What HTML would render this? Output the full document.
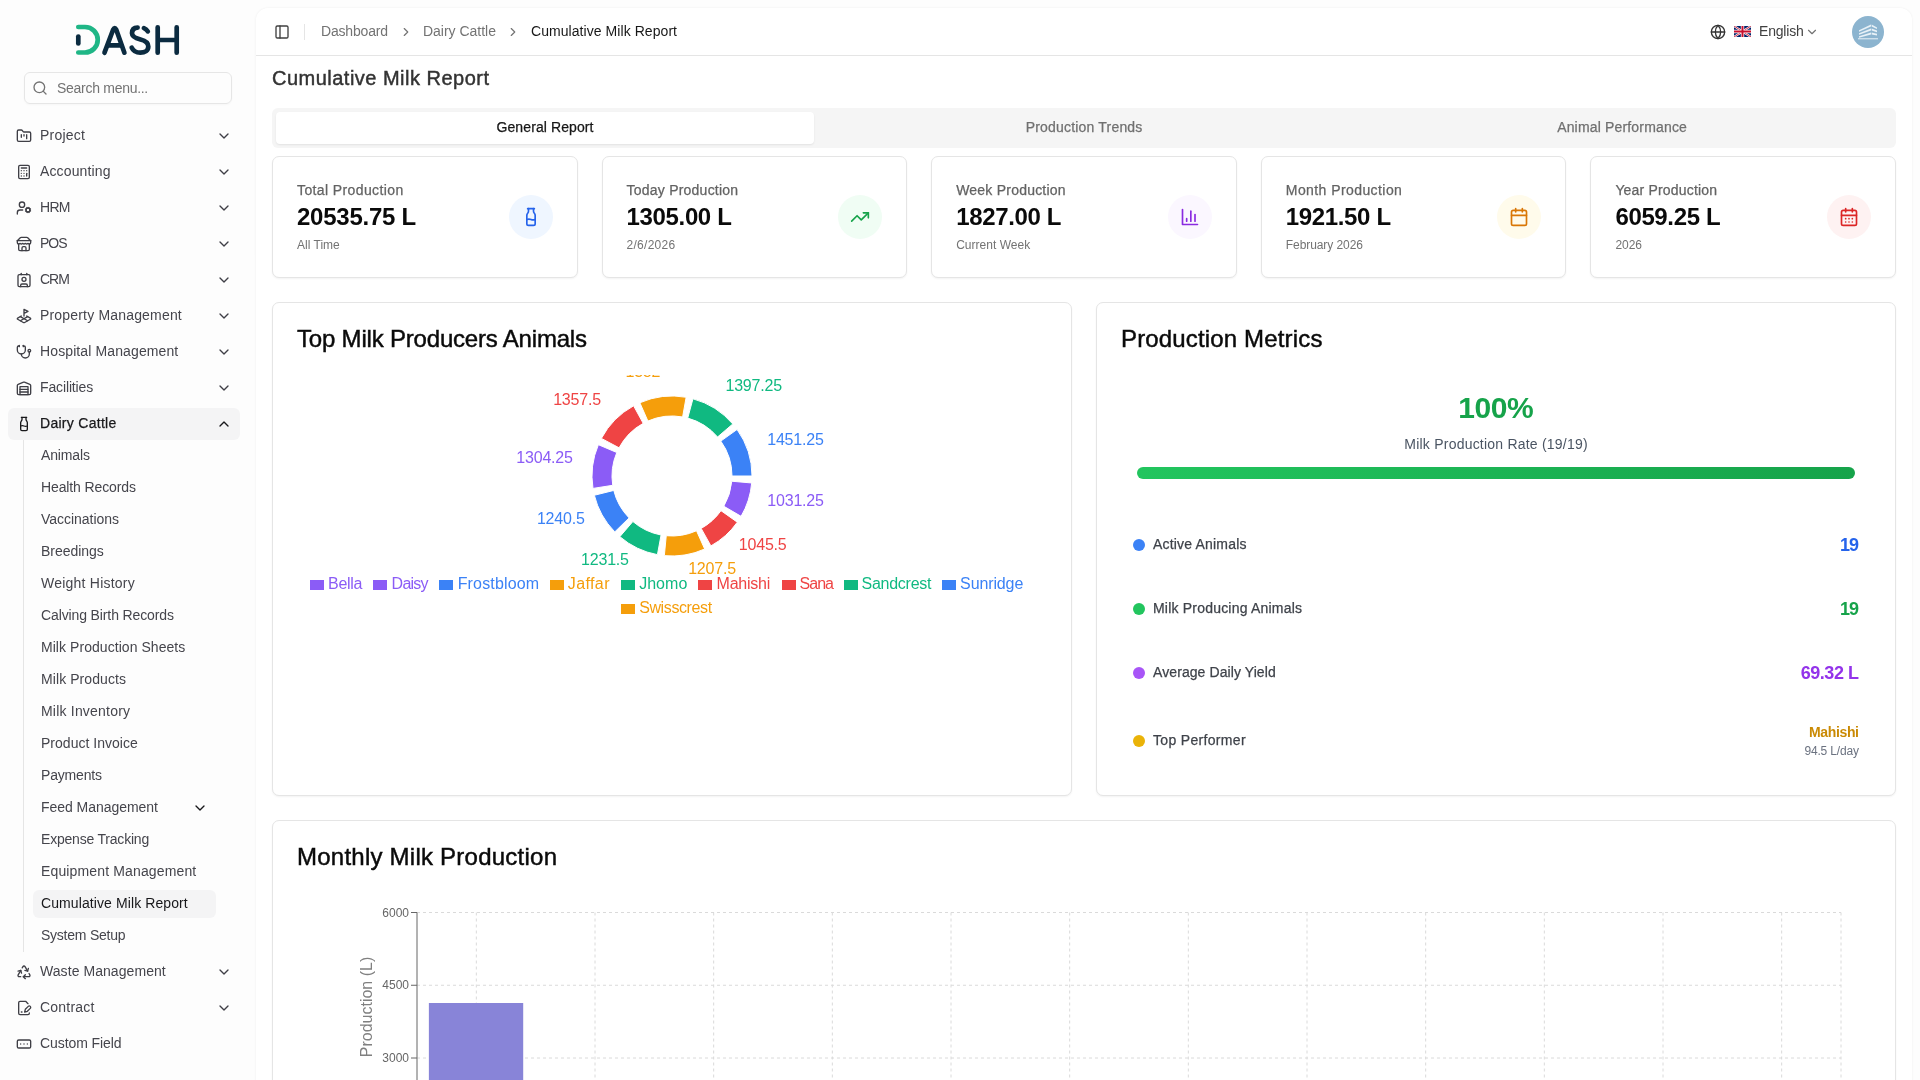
<!DOCTYPE html>
<html lang="en"><head><meta charset="utf-8"><title>Cumulative Milk Report</title>
<style>
*{box-sizing:border-box;margin:0;padding:0}
html,body{width:1920px;height:1080px;overflow:hidden;background:#fdfdfd;font-family:"Liberation Sans",sans-serif;}
#root{position:relative;width:1920px;height:1080px;overflow:hidden;will-change:transform;opacity:.999}
.t{position:absolute;white-space:nowrap}
.ic{position:absolute;display:block}
.abs{position:absolute}
.card{position:absolute;background:#fff;border:1px solid #e5e5e5;border-radius:7px;box-shadow:0 1px 2px rgba(0,0,0,.05)}
</style></head><body><div id="root">

<div class="abs" style="left:256px;top:8px;width:1656px;height:1100px;background:#fff;border-radius:12px 12px 0 0;box-shadow:0 0 3px rgba(0,0,0,.07)"></div>
<div class="abs" style="left:256px;top:55px;width:1656px;height:1px;background:#e5e5e5"></div>
<svg class="abs" style="left:70px;top:20px" width="120" height="40" viewBox="70 20 120 40" fill="none" stroke-linecap="round" stroke-linejoin="round" stroke-width="4.7">
<path d="M78.3 27H85A12.75 12.75 0 0 1 85 52.5H78.3" stroke="#1fb686"/>
<path d="M78.3 36.6V43.4" stroke="#0b2b40"/>
<g stroke="#0b2b40">
<path d="M104.5 52.7L113.2 29.5Q114.7 26.6 116.2 29.5L124.4 52.7"/><path d="M108 45.3H121"/>
<path d="M137.6 27.6C133.6 27.7 132 30 132 33.3C132 37 135.5 38.3 140.5 39.5C145.5 40.7 148.3 42.5 148.3 46.5C148.3 50.5 145 52.7 140.3 52.7C136 52.7 133 50.5 131.7 47.6"/>
<path d="M143.9 28.1C145.4 28.7 146.9 29.9 147.8 31.4"/>
<path d="M157.7 27.3V52.7M176.7 27.3V52.7M157.7 40H176.7"/>
</g></svg>
<div class="abs" style="left:24px;top:72px;width:208px;height:32px;border:1px solid #e6e6e6;border-radius:6px;box-shadow:0 1px 2px rgba(0,0,0,.03)"></div>
<svg class="ic" style="left:32px;top:80px" width="16" height="16" viewBox="0 0 24 24" fill="none" stroke="#737373" stroke-width="2" stroke-linecap="round" stroke-linejoin="round"><circle cx="11" cy="11" r="8"/><path d="m21 21-4.3-4.3"/></svg>
<div class="t" style="top:77.5px;font-size:14px;line-height:21px;color:#737373;font-weight:400;letter-spacing:-0.284px;left:57px;">Search menu...</div>
<svg class="ic" style="left:16px;top:128px" width="16" height="16" viewBox="0 0 24 24" fill="none" stroke="#3f3f46" stroke-width="2" stroke-linecap="round" stroke-linejoin="round"><path d="M4 20h16a2 2 0 0 0 2-2V8a2 2 0 0 0-2-2h-7.93a2 2 0 0 1-1.66-.9l-.82-1.2A2 2 0 0 0 7.93 3H4a2 2 0 0 0-2 2v13c0 1.1.9 2 2 2Z"/><path d="M8 10v4"/><path d="M12 10v2"/><path d="M16 10v6"/></svg>
<div class="t" style="top:124.5px;font-size:14px;line-height:21px;color:#45454c;font-weight:400;letter-spacing:0.237px;left:40px;">Project</div>
<svg class="ic" style="left:216px;top:128px" width="16" height="16" viewBox="0 0 24 24" fill="none" stroke="#3f3f46" stroke-width="2" stroke-linecap="round" stroke-linejoin="round"><path d="m6 9 6 6 6-6"/></svg>
<svg class="ic" style="left:16px;top:164px" width="16" height="16" viewBox="0 0 24 24" fill="none" stroke="#3f3f46" stroke-width="2" stroke-linecap="round" stroke-linejoin="round"><rect width="16" height="20" x="4" y="2" rx="2"/><line x1="8" x2="16" y1="6" y2="6"/><line x1="16" x2="16" y1="14" y2="18"/><path d="M16 10h.01"/><path d="M12 10h.01"/><path d="M8 10h.01"/><path d="M12 14h.01"/><path d="M8 14h.01"/><path d="M12 18h.01"/><path d="M8 18h.01"/></svg>
<div class="t" style="top:160.5px;font-size:14px;line-height:21px;color:#45454c;font-weight:400;letter-spacing:0.135px;left:40px;">Accounting</div>
<svg class="ic" style="left:216px;top:164px" width="16" height="16" viewBox="0 0 24 24" fill="none" stroke="#3f3f46" stroke-width="2" stroke-linecap="round" stroke-linejoin="round"><path d="m6 9 6 6 6-6"/></svg>
<svg class="ic" style="left:16px;top:200px" width="16" height="16" viewBox="0 0 24 24" fill="none" stroke="#3f3f46" stroke-width="2" stroke-linecap="round" stroke-linejoin="round"><circle cx="18" cy="15" r="3"/><circle cx="9" cy="7" r="4"/><path d="M10 15H6a4 4 0 0 0-4 4v2"/><path d="m21.7 16.4-.9-.3"/><path d="m15.2 13.9-.9-.3"/><path d="m16.6 18.7.3-.9"/><path d="m19.1 12.2.3-.9"/><path d="m19.6 18.7-.4-1"/><path d="m16.8 12.3-.4-1"/><path d="m14.3 16.6 1-.4"/><path d="m20.7 13.8 1-.4"/></svg>
<div class="t" style="top:196.5px;font-size:14px;line-height:21px;color:#45454c;font-weight:400;letter-spacing:-0.695px;left:40px;">HRM</div>
<svg class="ic" style="left:216px;top:200px" width="16" height="16" viewBox="0 0 24 24" fill="none" stroke="#3f3f46" stroke-width="2" stroke-linecap="round" stroke-linejoin="round"><path d="m6 9 6 6 6-6"/></svg>
<svg class="ic" style="left:16px;top:236px" width="16" height="16" viewBox="0 0 24 24" fill="none" stroke="#3f3f46" stroke-width="2" stroke-linecap="round" stroke-linejoin="round"><path d="m2 7 4.41-4.41A2 2 0 0 1 7.83 2h8.34a2 2 0 0 1 1.42.59L22 7"/><path d="M4 12v8a2 2 0 0 0 2 2h12a2 2 0 0 0 2-2v-8"/><path d="M15 22v-4a2 2 0 0 0-2-2h-2a2 2 0 0 0-2 2v4"/><path d="M2 7h20"/><path d="M22 7v3a2 2 0 0 1-2 2a2.7 2.7 0 0 1-1.59-.63.7.7 0 0 0-.82 0A2.7 2.7 0 0 1 16 12a2.7 2.7 0 0 1-1.59-.63.7.7 0 0 0-.82 0A2.7 2.7 0 0 1 12 12a2.7 2.7 0 0 1-1.59-.63.7.7 0 0 0-.82 0A2.7 2.7 0 0 1 8 12a2.7 2.7 0 0 1-1.59-.63.7.7 0 0 0-.82 0A2.7 2.7 0 0 1 4 12a2 2 0 0 1-2-2V7"/></svg>
<div class="t" style="top:232.5px;font-size:14px;line-height:21px;color:#45454c;font-weight:400;letter-spacing:-1.000px;left:40px;">POS</div>
<svg class="ic" style="left:216px;top:236px" width="16" height="16" viewBox="0 0 24 24" fill="none" stroke="#3f3f46" stroke-width="2" stroke-linecap="round" stroke-linejoin="round"><path d="m6 9 6 6 6-6"/></svg>
<svg class="ic" style="left:16px;top:272px" width="16" height="16" viewBox="0 0 24 24" fill="none" stroke="#3f3f46" stroke-width="2" stroke-linecap="round" stroke-linejoin="round"><path d="M16 2v2"/><path d="M7 22v-2a2 2 0 0 1 2-2h6a2 2 0 0 1 2 2v2"/><path d="M8 2v2"/><circle cx="12" cy="11" r="3"/><rect x="3" y="4" width="18" height="18" rx="2"/></svg>
<div class="t" style="top:268.5px;font-size:14px;line-height:21px;color:#45454c;font-weight:400;letter-spacing:-1.000px;left:40px;">CRM</div>
<svg class="ic" style="left:216px;top:272px" width="16" height="16" viewBox="0 0 24 24" fill="none" stroke="#3f3f46" stroke-width="2" stroke-linecap="round" stroke-linejoin="round"><path d="m6 9 6 6 6-6"/></svg>
<svg class="ic" style="left:16px;top:308px" width="16" height="16" viewBox="0 0 24 24" fill="none" stroke="#3f3f46" stroke-width="2" stroke-linecap="round" stroke-linejoin="round"><path d="m12 8 6-3-6-3v10"/><path d="m8 11.99-5.5 3.14a1 1 0 0 0 0 1.74l8.5 4.86a2 2 0 0 0 2 0l8.5-4.86a1 1 0 0 0 0-1.74L16 12"/><path d="m6.49 12.85 11.02 6.3"/><path d="M17.51 12.85 6.5 19.15"/></svg>
<div class="t" style="top:304.5px;font-size:14px;line-height:21px;color:#45454c;font-weight:400;letter-spacing:0.179px;left:40px;">Property Management</div>
<svg class="ic" style="left:216px;top:308px" width="16" height="16" viewBox="0 0 24 24" fill="none" stroke="#3f3f46" stroke-width="2" stroke-linecap="round" stroke-linejoin="round"><path d="m6 9 6 6 6-6"/></svg>
<svg class="ic" style="left:16px;top:344px" width="16" height="16" viewBox="0 0 24 24" fill="none" stroke="#3f3f46" stroke-width="2" stroke-linecap="round" stroke-linejoin="round"><path d="M11 2v2"/><path d="M5 2v2"/><path d="M5 3H4a2 2 0 0 0-2 2v4a6 6 0 0 0 12 0V5a2 2 0 0 0-2-2h-1"/><path d="M8 15a6 6 0 0 0 12 0v-3"/><circle cx="20" cy="10" r="2"/></svg>
<div class="t" style="top:340.5px;font-size:14px;line-height:21px;color:#45454c;font-weight:400;letter-spacing:0.115px;left:40px;">Hospital Management</div>
<svg class="ic" style="left:216px;top:344px" width="16" height="16" viewBox="0 0 24 24" fill="none" stroke="#3f3f46" stroke-width="2" stroke-linecap="round" stroke-linejoin="round"><path d="m6 9 6 6 6-6"/></svg>
<svg class="ic" style="left:16px;top:380px" width="16" height="16" viewBox="0 0 24 24" fill="none" stroke="#3f3f46" stroke-width="2" stroke-linecap="round" stroke-linejoin="round"><path d="M22 8.35V20a2 2 0 0 1-2 2H4a2 2 0 0 1-2-2V8.35A2 2 0 0 1 3.26 6.5l8-3.2a2 2 0 0 1 1.48 0l8 3.2A2 2 0 0 1 22 8.35Z"/><path d="M6 18h12"/><path d="M6 14h12"/><rect width="12" height="12" x="6" y="10"/></svg>
<div class="t" style="top:376.5px;font-size:14px;line-height:21px;color:#45454c;font-weight:400;letter-spacing:-0.135px;left:40px;">Facilities</div>
<svg class="ic" style="left:216px;top:380px" width="16" height="16" viewBox="0 0 24 24" fill="none" stroke="#3f3f46" stroke-width="2" stroke-linecap="round" stroke-linejoin="round"><path d="m6 9 6 6 6-6"/></svg>
<div class="abs" style="left:8px;top:408px;width:232px;height:32px;background:#f4f4f5;border-radius:6px"></div>
<svg class="ic" style="left:16px;top:416px" width="16" height="16" viewBox="0 0 24 24" fill="none" stroke="#18181b" stroke-width="2" stroke-linecap="round" stroke-linejoin="round"><path d="M8 2h8"/><path d="M9 2v2.789a4 4 0 0 1-.672 2.219l-.656.984A4 4 0 0 0 7 10.212V20a2 2 0 0 0 2 2h6a2 2 0 0 0 2-2v-9.789a4 4 0 0 0-.672-2.219l-.656-.984A4 4 0 0 1 15 4.788V2"/><path d="M7 15a6.472 6.472 0 0 1 5 0 6.47 6.47 0 0 0 5 0"/></svg>
<div class="t" style="top:412.5px;font-size:14px;line-height:21px;color:#18181b;font-weight:400;-webkit-text-stroke:0.25px #18181b;letter-spacing:0.283px;left:40px;">Dairy Cattle</div>
<svg class="ic" style="left:216px;top:416px" width="16" height="16" viewBox="0 0 24 24" fill="none" stroke="#18181b" stroke-width="2" stroke-linecap="round" stroke-linejoin="round"><path d="m18 15-6-6-6 6"/></svg>
<div class="abs" style="left:23px;top:440px;width:1px;height:512px;background:#e5e5e5"></div>
<div class="t" style="top:444.5px;font-size:14px;line-height:21px;color:#45454c;font-weight:400;letter-spacing:-0.133px;left:41px;">Animals</div>
<div class="t" style="top:476.5px;font-size:14px;line-height:21px;color:#45454c;font-weight:400;letter-spacing:-0.115px;left:41px;">Health Records</div>
<div class="t" style="top:508.5px;font-size:14px;line-height:21px;color:#45454c;font-weight:400;letter-spacing:-0.031px;left:41px;">Vaccinations</div>
<div class="t" style="top:540.5px;font-size:14px;line-height:21px;color:#45454c;font-weight:400;letter-spacing:-0.037px;left:41px;">Breedings</div>
<div class="t" style="top:572.5px;font-size:14px;line-height:21px;color:#45454c;font-weight:400;letter-spacing:0.228px;left:41px;">Weight History</div>
<div class="t" style="top:604.5px;font-size:14px;line-height:21px;color:#45454c;font-weight:400;letter-spacing:-0.120px;left:41px;">Calving Birth Records</div>
<div class="t" style="top:636.5px;font-size:14px;line-height:21px;color:#45454c;font-weight:400;letter-spacing:0.051px;left:41px;">Milk Production Sheets</div>
<div class="t" style="top:668.5px;font-size:14px;line-height:21px;color:#45454c;font-weight:400;letter-spacing:0.081px;left:41px;">Milk Products</div>
<div class="t" style="top:700.5px;font-size:14px;line-height:21px;color:#45454c;font-weight:400;letter-spacing:0.203px;left:41px;">Milk Inventory</div>
<div class="t" style="top:732.5px;font-size:14px;line-height:21px;color:#45454c;font-weight:400;letter-spacing:0.018px;left:41px;">Product Invoice</div>
<div class="t" style="top:764.5px;font-size:14px;line-height:21px;color:#45454c;font-weight:400;letter-spacing:-0.179px;left:41px;">Payments</div>
<div class="t" style="top:796.5px;font-size:14px;line-height:21px;color:#45454c;font-weight:400;letter-spacing:-0.038px;left:41px;">Feed Management</div>
<svg class="ic" style="left:192px;top:800px" width="16" height="16" viewBox="0 0 24 24" fill="none" stroke="#18181b" stroke-width="2" stroke-linecap="round" stroke-linejoin="round"><path d="m6 9 6 6 6-6"/></svg>
<div class="t" style="top:828.5px;font-size:14px;line-height:21px;color:#45454c;font-weight:400;letter-spacing:-0.203px;left:41px;">Expense Tracking</div>
<div class="t" style="top:860.5px;font-size:14px;line-height:21px;color:#45454c;font-weight:400;letter-spacing:0.142px;left:41px;">Equipment Management</div>
<div class="abs" style="left:33px;top:890px;width:183px;height:28px;background:#f4f4f5;border-radius:6px"></div>
<div class="t" style="top:892.5px;font-size:14px;line-height:21px;color:#18181b;font-weight:400;letter-spacing:0.097px;left:41px;">Cumulative Milk Report</div>
<div class="t" style="top:924.5px;font-size:14px;line-height:21px;color:#45454c;font-weight:400;letter-spacing:-0.241px;left:41px;">System Setup</div>
<svg class="ic" style="left:16px;top:964px" width="16" height="16" viewBox="0 0 24 24" fill="none" stroke="#3f3f46" stroke-width="2" stroke-linecap="round" stroke-linejoin="round"><path d="M7 19H4.815a1.83 1.83 0 0 1-1.57-.881 1.785 1.785 0 0 1-.004-1.784L7.196 9.5"/><path d="M11 19h8.203a1.83 1.83 0 0 0 1.556-.89 1.784 1.784 0 0 0 0-1.775l-1.226-2.12"/><path d="m14 16-3 3 3 3"/><path d="M8.293 13.596 7.196 9.5 3.1 10.598"/><path d="m9.344 5.811 1.093-1.892A1.83 1.83 0 0 1 11.985 3a1.784 1.784 0 0 1 1.546.888l3.943 6.843"/><path d="m13.378 9.633 4.096 1.098 1.097-4.096"/></svg>
<div class="t" style="top:960.5px;font-size:14px;line-height:21px;color:#45454c;font-weight:400;letter-spacing:0.066px;left:40px;">Waste Management</div>
<svg class="ic" style="left:216px;top:964px" width="16" height="16" viewBox="0 0 24 24" fill="none" stroke="#3f3f46" stroke-width="2" stroke-linecap="round" stroke-linejoin="round"><path d="m6 9 6 6 6-6"/></svg>
<svg class="ic" style="left:16px;top:1000px" width="16" height="16" viewBox="0 0 24 24" fill="none" stroke="#3f3f46" stroke-width="2" stroke-linecap="round" stroke-linejoin="round"><path d="M20 19.5v.5a2 2 0 0 1-2 2H6a2 2 0 0 1-2-2V4a2 2 0 0 1 2-2h8.5L18 5.5"/><path d="M8 18h1"/><path d="M18.4 9.6a2 2 0 1 1 3 3L17 17l-4 1 1-4Z"/></svg>
<div class="t" style="top:996.5px;font-size:14px;line-height:21px;color:#45454c;font-weight:400;letter-spacing:0.225px;left:40px;">Contract</div>
<svg class="ic" style="left:216px;top:1000px" width="16" height="16" viewBox="0 0 24 24" fill="none" stroke="#3f3f46" stroke-width="2" stroke-linecap="round" stroke-linejoin="round"><path d="m6 9 6 6 6-6"/></svg>
<svg class="ic" style="left:16px;top:1036px" width="16" height="16" viewBox="0 0 24 24" fill="none" stroke="#3f3f46" stroke-width="2" stroke-linecap="round" stroke-linejoin="round"><rect width="20" height="12" x="2" y="6" rx="2"/><path d="M12 12h.01"/><path d="M17 12h.01"/><path d="M7 12h.01"/></svg>
<div class="t" style="top:1032.5px;font-size:14px;line-height:21px;color:#45454c;font-weight:400;letter-spacing:-0.088px;left:40px;">Custom Field</div>
<svg class="ic" style="left:274px;top:24px" width="16" height="16" viewBox="0 0 24 24" fill="none" stroke="#404040" stroke-width="2" stroke-linecap="round" stroke-linejoin="round"><rect width="18" height="18" x="3" y="3" rx="2"/><path d="M9 3v18"/></svg>
<div class="abs" style="left:304px;top:24px;width:1px;height:16px;background:#e5e5e5"></div>
<div class="t" style="top:20.5px;font-size:14px;line-height:21px;color:#737373;font-weight:400;letter-spacing:-0.188px;left:321px;">Dashboard</div>
<svg class="ic" style="left:399px;top:24.5px" width="14" height="14" viewBox="0 0 24 24" fill="none" stroke="#737373" stroke-width="2" stroke-linecap="round" stroke-linejoin="round"><path d="m9 18 6-6-6-6"/></svg>
<div class="t" style="top:20.5px;font-size:14px;line-height:21px;color:#737373;font-weight:400;letter-spacing:-0.013px;left:423px;">Dairy Cattle</div>
<svg class="ic" style="left:506px;top:24.5px" width="14" height="14" viewBox="0 0 24 24" fill="none" stroke="#737373" stroke-width="2" stroke-linecap="round" stroke-linejoin="round"><path d="m9 18 6-6-6-6"/></svg>
<div class="t" style="top:20.5px;font-size:14px;line-height:21px;color:#171717;font-weight:400;letter-spacing:0.061px;left:531px;">Cumulative Milk Report</div>
<svg class="ic" style="left:1710px;top:24px" width="16" height="16" viewBox="0 0 24 24" fill="none" stroke="#333" stroke-width="2" stroke-linecap="round" stroke-linejoin="round"><circle cx="12" cy="12" r="10"/><path d="M12 2a14.5 14.5 0 0 0 0 20 14.5 14.5 0 0 0 0-20"/><path d="M2 12h20"/></svg>
<svg class="abs" style="left:1734px;top:25.5px" width="17" height="11" viewBox="0 0 60 36" preserveAspectRatio="none">
<clipPath id="fc"><rect width="60" height="36" rx="2"/></clipPath>
<g clip-path="url(#fc)"><rect width="60" height="36" fill="#012169"/>
<path d="M0,0 60,36M60,0 0,36" stroke="#fff" stroke-width="7"/>
<path d="M0,0 60,36M60,0 0,36" stroke="#C8102E" stroke-width="3"/>
<path d="M30,0V36M0,18H60" stroke="#fff" stroke-width="12"/>
<path d="M30,0V36M0,18H60" stroke="#C8102E" stroke-width="7"/></g></svg>
<div class="t" style="top:20.5px;font-size:14px;line-height:21px;color:#404040;font-weight:400;letter-spacing:-0.187px;left:1759px;">English</div>
<svg class="ic" style="left:1805px;top:25px" width="14" height="14" viewBox="0 0 24 24" fill="none" stroke="#737373" stroke-width="2" stroke-linecap="round" stroke-linejoin="round"><path d="m6 9 6 6 6-6"/></svg>
<svg class="abs" style="left:1852px;top:16px" width="32" height="32" viewBox="0 0 32 32">
<circle cx="16" cy="16" r="16" fill="#8cb4cf"/>
<g fill="#e8f1f7"><path d="M7 14.2L19 8.6V10.4L7 15.8Z"/><path d="M7 17.2L19 12.4V14.4L7 18.8Z"/><path d="M7 20.2L19 16.4V18.4L7 21.8Z"/>
<path d="M19.6 8.6L25 11.4V13L19.6 10.4Z"/><path d="M19.6 12.4L25 14.6V16.2L19.6 14.4Z"/><path d="M19.6 16.4L25 17.8V19.4L19.6 18.4Z"/>
<rect x="6" y="22.3" width="20" height="1"/></g></svg>
<div class="t" style="top:64.0px;font-size:20px;line-height:28px;color:#333;font-weight:400;-webkit-text-stroke:0.45px #333;letter-spacing:0.489px;left:272px;">Cumulative Milk Report</div>
<div class="abs" style="left:272px;top:108px;width:1624px;height:40px;background:#f5f5f5;border-radius:6px"></div>
<div class="abs" style="left:276px;top:112px;width:538px;height:32px;background:#fff;border-radius:4px;box-shadow:0 1px 2px rgba(0,0,0,.08)"></div>
<div class="t" style="top:116.5px;font-size:14px;line-height:21px;color:#171717;font-weight:400;-webkit-text-stroke:0.25px #171717;letter-spacing:0.099px;left:545.049px;transform:translateX(-50%);">General Report</div>
<div class="t" style="top:116.5px;font-size:14px;line-height:21px;color:#707070;font-weight:400;-webkit-text-stroke:0.25px #707070;letter-spacing:0.192px;left:1084.096px;transform:translateX(-50%);">Production Trends</div>
<div class="t" style="top:116.5px;font-size:14px;line-height:21px;color:#707070;font-weight:400;-webkit-text-stroke:0.25px #707070;letter-spacing:0.169px;left:1622.084px;transform:translateX(-50%);">Animal Performance</div>
<div class="card" style="left:272.0px;top:156px;width:305.6px;height:122px"></div>
<div class="t" style="top:180.0px;font-size:14px;line-height:20px;color:#636363;font-weight:400;-webkit-text-stroke:0.25px #636363;letter-spacing:0.390px;left:297.0px;">Total Production</div>
<div class="t" style="top:201.0px;font-size:24px;line-height:32px;color:#0a0a0a;font-weight:700;letter-spacing:-0.243px;left:297.0px;">20535.75 L</div>
<div class="t" style="top:237.0px;font-size:12px;line-height:16px;color:#737373;font-weight:400;letter-spacing:0.009px;left:297.0px;">All Time</div>
<div class="abs" style="left:508.6px;top:195px;width:44px;height:44px;border-radius:50%;background:#eff6ff"></div>
<svg class="ic" style="left:520.6px;top:207px" width="20" height="20" viewBox="0 0 24 24" fill="none" stroke="#2563eb" stroke-width="2" stroke-linecap="round" stroke-linejoin="round"><path d="M8 2h8"/><path d="M9 2v2.789a4 4 0 0 1-.672 2.219l-.656.984A4 4 0 0 0 7 10.212V20a2 2 0 0 0 2 2h6a2 2 0 0 0 2-2v-9.789a4 4 0 0 0-.672-2.219l-.656-.984A4 4 0 0 1 15 4.788V2"/><path d="M7 15a6.472 6.472 0 0 1 5 0 6.47 6.47 0 0 0 5 0"/></svg>
<div class="card" style="left:601.6px;top:156px;width:305.6px;height:122px"></div>
<div class="t" style="top:180.0px;font-size:14px;line-height:20px;color:#636363;font-weight:400;-webkit-text-stroke:0.25px #636363;letter-spacing:0.221px;left:626.6px;">Today Production</div>
<div class="t" style="top:201.0px;font-size:24px;line-height:32px;color:#0a0a0a;font-weight:700;letter-spacing:-0.355px;left:626.6px;">1305.00 L</div>
<div class="t" style="top:237.0px;font-size:12px;line-height:16px;color:#737373;font-weight:400;letter-spacing:0.254px;left:626.6px;">2/6/2026</div>
<div class="abs" style="left:838.2px;top:195px;width:44px;height:44px;border-radius:50%;background:#f0fdf4"></div>
<svg class="ic" style="left:850.2px;top:207px" width="20" height="20" viewBox="0 0 24 24" fill="none" stroke="#16a34a" stroke-width="2" stroke-linecap="round" stroke-linejoin="round"><polyline points="22 7 13.5 15.5 8.5 10.5 2 17"/><polyline points="16 7 22 7 22 13"/></svg>
<div class="card" style="left:931.2px;top:156px;width:305.6px;height:122px"></div>
<div class="t" style="top:180.0px;font-size:14px;line-height:20px;color:#636363;font-weight:400;-webkit-text-stroke:0.25px #636363;letter-spacing:0.217px;left:956.2px;">Week Production</div>
<div class="t" style="top:201.0px;font-size:24px;line-height:32px;color:#0a0a0a;font-weight:700;letter-spacing:-0.355px;left:956.2px;">1827.00 L</div>
<div class="t" style="top:237.0px;font-size:12px;line-height:16px;color:#737373;font-weight:400;letter-spacing:0.017px;left:956.2px;">Current Week</div>
<div class="abs" style="left:1167.8px;top:195px;width:44px;height:44px;border-radius:50%;background:#fbf7ff"></div>
<svg class="ic" style="left:1179.8px;top:207px" width="20" height="20" viewBox="0 0 24 24" fill="none" stroke="#8a2be0" stroke-width="2" stroke-linecap="round" stroke-linejoin="round"><path d="M3 3v18h18"/><path d="M18 17V9"/><path d="M13 17V5"/><path d="M8 17v-3"/></svg>
<div class="card" style="left:1260.8px;top:156px;width:305.6px;height:122px"></div>
<div class="t" style="top:180.0px;font-size:14px;line-height:20px;color:#636363;font-weight:400;-webkit-text-stroke:0.25px #636363;letter-spacing:0.424px;left:1285.8000000000002px;">Month Production</div>
<div class="t" style="top:201.0px;font-size:24px;line-height:32px;color:#0a0a0a;font-weight:700;letter-spacing:-0.355px;left:1285.8000000000002px;">1921.50 L</div>
<div class="t" style="top:237.0px;font-size:12px;line-height:16px;color:#737373;font-weight:400;letter-spacing:-0.079px;left:1285.8000000000002px;">February 2026</div>
<div class="abs" style="left:1497.4px;top:195px;width:44px;height:44px;border-radius:50%;background:#fffbeb"></div>
<svg class="ic" style="left:1509.4px;top:207px" width="20" height="20" viewBox="0 0 24 24" fill="none" stroke="#d97706" stroke-width="2" stroke-linecap="round" stroke-linejoin="round"><path d="M8 2v4"/><path d="M16 2v4"/><rect width="18" height="18" x="3" y="4" rx="2"/><path d="M3 10h18"/></svg>
<div class="card" style="left:1590.4px;top:156px;width:305.6px;height:122px"></div>
<div class="t" style="top:180.0px;font-size:14px;line-height:20px;color:#636363;font-weight:400;-webkit-text-stroke:0.25px #636363;letter-spacing:0.178px;left:1615.4px;">Year Production</div>
<div class="t" style="top:201.0px;font-size:24px;line-height:32px;color:#0a0a0a;font-weight:700;letter-spacing:-0.355px;left:1615.4px;">6059.25 L</div>
<div class="t" style="top:237.0px;font-size:12px;line-height:16px;color:#737373;font-weight:400;letter-spacing:-0.034px;left:1615.4px;">2026</div>
<div class="abs" style="left:1827.0px;top:195px;width:44px;height:44px;border-radius:50%;background:#fef2f2"></div>
<svg class="ic" style="left:1839.0px;top:207px" width="20" height="20" viewBox="0 0 24 24" fill="none" stroke="#dc2626" stroke-width="2" stroke-linecap="round" stroke-linejoin="round"><path d="M8 2v4"/><path d="M16 2v4"/><rect width="18" height="18" x="3" y="4" rx="2"/><path d="M3 10h18"/><path d="M8 14h.01"/><path d="M12 14h.01"/><path d="M16 14h.01"/><path d="M8 18h.01"/><path d="M12 18h.01"/><path d="M16 18h.01"/></svg>
<div class="card" style="left:272px;top:302px;width:800px;height:494px"></div>
<div class="card" style="left:1096px;top:302px;width:800px;height:494px"></div>
<div class="t" style="top:323.0px;font-size:24px;line-height:32px;color:#0a0a0a;font-weight:400;-webkit-text-stroke:0.45px #0a0a0a;letter-spacing:-0.191px;left:297px;">Top Milk Producers Animals</div>
<div class="t" style="top:323.0px;font-size:24px;line-height:32px;color:#0a0a0a;font-weight:400;-webkit-text-stroke:0.45px #0a0a0a;letter-spacing:0.156px;left:1121px;">Production Metrics</div>
<svg class="abs" style="left:0;top:375.0px;overflow:hidden" width="1400" height="201" viewBox="0 0 1400 201" font-family="Liberation Sans, sans-serif" font-size="16"><path d="M752.00,101.00A80.0,80.0,0,0,0,737.07,54.47L720.81,66.10A60.0,60.0,0,0,1,732.00,101.00Z" fill="#3b82f6" stroke="#fff" stroke-width="1"/><path d="M732.77,48.97A80.0,80.0,0,0,0,692.96,23.79L687.72,43.10A60.0,60.0,0,0,1,717.58,61.98Z" fill="#10b981" stroke="#fff" stroke-width="1"/><path d="M686.15,22.26A80.0,80.0,0,0,0,639.86,27.74L647.90,46.05A60.0,60.0,0,0,1,682.61,41.95Z" fill="#f59e0b" stroke="#fff" stroke-width="1"/><path d="M633.60,30.82A80.0,80.0,0,0,0,601.39,63.39L619.05,72.79A60.0,60.0,0,0,1,643.20,48.36Z" fill="#ef4444" stroke="#fff" stroke-width="1"/><path d="M598.38,69.68A80.0,80.0,0,0,0,592.97,113.41L612.73,110.30A60.0,60.0,0,0,1,616.79,77.51Z" fill="#8b5cf6" stroke="#fff" stroke-width="1"/><path d="M594.35,120.25A80.0,80.0,0,0,0,614.77,156.90L629.08,142.92A60.0,60.0,0,0,1,613.76,115.44Z" fill="#3b82f6" stroke="#fff" stroke-width="1"/><path d="M619.86,161.67A80.0,80.0,0,0,0,657.43,179.66L661.07,160.00A60.0,60.0,0,0,1,632.89,146.50Z" fill="#10b981" stroke="#fff" stroke-width="1"/><path d="M664.34,180.63A80.0,80.0,0,0,0,704.67,174.03L696.50,155.77A60.0,60.0,0,0,1,666.26,160.72Z" fill="#f59e0b" stroke="#fff" stroke-width="1"/><path d="M710.91,170.90A80.0,80.0,0,0,0,737.31,147.20L720.98,135.65A60.0,60.0,0,0,1,701.18,153.43Z" fill="#ef4444" stroke="#fff" stroke-width="1"/><path d="M741.09,141.33A80.0,80.0,0,0,0,751.70,107.97L731.77,106.23A60.0,60.0,0,0,1,723.82,131.25Z" fill="#8b5cf6" stroke="#fff" stroke-width="1"/><text x="767.22" y="69.71" fill="#3b82f6" text-anchor="start" letter-spacing="-0.2">1451.25</text><text x="725.45" y="15.73" fill="#10b981" text-anchor="start" letter-spacing="-0.2">1397.25</text><text x="660.25" y="1.99" fill="#f59e0b" text-anchor="end" letter-spacing="-0.2">1382</text><text x="600.90" y="29.94" fill="#ef4444" text-anchor="end" letter-spacing="-0.2">1357.5</text><text x="572.76" y="87.96" fill="#8b5cf6" text-anchor="end" letter-spacing="-0.2">1304.25</text><text x="584.64" y="148.92" fill="#3b82f6" text-anchor="end" letter-spacing="-0.2">1240.5</text><text x="628.82" y="190.44" fill="#10b981" text-anchor="end" letter-spacing="-0.2">1231.5</text><text x="688.17" y="198.93" fill="#f59e0b" text-anchor="start" letter-spacing="-0.2">1207.5</text><text x="738.80" y="174.67" fill="#ef4444" text-anchor="start" letter-spacing="-0.2">1045.5</text><text x="767.30" y="130.55" fill="#8b5cf6" text-anchor="start" letter-spacing="-0.2">1031.25</text></svg>
<div class="abs" style="left:309.9px;top:579.75px;width:14px;height:10px;background:#8b5cf6"></div>
<div class="t" style="top:571.71px;font-size:16px;line-height:24px;color:#8b5cf6;font-weight:400;letter-spacing:-0.345px;left:328.09999999999997px;">Bella</div>
<div class="abs" style="left:373.0px;top:579.75px;width:14px;height:10px;background:#8b5cf6"></div>
<div class="t" style="top:571.71px;font-size:16px;line-height:24px;color:#8b5cf6;font-weight:400;letter-spacing:-0.754px;left:391.59999999999997px;">Daisy</div>
<div class="abs" style="left:438.9px;top:579.75px;width:14px;height:10px;background:#3b82f6"></div>
<div class="t" style="top:571.71px;font-size:16px;line-height:24px;color:#3b82f6;font-weight:400;letter-spacing:0.152px;left:457.7px;">Frostbloom</div>
<div class="abs" style="left:550.0px;top:579.75px;width:14px;height:10px;background:#f59e0b"></div>
<div class="t" style="top:571.71px;font-size:16px;line-height:24px;color:#f59e0b;font-weight:400;letter-spacing:0.393px;left:567.8px;">Jaffar</div>
<div class="abs" style="left:621.0px;top:579.75px;width:14px;height:10px;background:#10b981"></div>
<div class="t" style="top:571.71px;font-size:16px;line-height:24px;color:#10b981;font-weight:400;letter-spacing:0.017px;left:639.1999999999999px;">Jhomo</div>
<div class="abs" style="left:698.3px;top:579.75px;width:14px;height:10px;background:#ef4444"></div>
<div class="t" style="top:571.71px;font-size:16px;line-height:24px;color:#ef4444;font-weight:400;letter-spacing:-0.240px;left:716.6px;">Mahishi</div>
<div class="abs" style="left:782.2px;top:579.75px;width:14px;height:10px;background:#ef4444"></div>
<div class="t" style="top:571.71px;font-size:16px;line-height:24px;color:#ef4444;font-weight:400;letter-spacing:-1.000px;left:799.6px;">Sana</div>
<div class="abs" style="left:844.2px;top:579.75px;width:14px;height:10px;background:#10b981"></div>
<div class="t" style="top:571.71px;font-size:16px;line-height:24px;color:#10b981;font-weight:400;letter-spacing:-0.256px;left:861.5px;">Sandcrest</div>
<div class="abs" style="left:942.2px;top:579.75px;width:14px;height:10px;background:#3b82f6"></div>
<div class="t" style="top:571.71px;font-size:16px;line-height:24px;color:#3b82f6;font-weight:400;letter-spacing:-0.121px;left:960.1px;">Sunridge</div>
<div class="abs" style="left:621.0px;top:603.75px;width:14px;height:10px;background:#f59e0b"></div>
<div class="t" style="top:595.71px;font-size:16px;line-height:24px;color:#f59e0b;font-weight:400;letter-spacing:-0.395px;left:639.1999999999999px;">Swisscrest</div>
<div class="t" style="top:390.0px;font-size:30px;line-height:36px;color:#16a34a;font-weight:700;letter-spacing:-0.411px;left:1495.794px;transform:translateX(-50%);">100%</div>
<div class="t" style="top:434.0px;font-size:14px;line-height:20px;color:#4b5563;font-weight:400;letter-spacing:0.218px;left:1496.109px;transform:translateX(-50%);">Milk Production Rate (19/19)</div>
<div class="abs" style="left:1137px;top:467px;width:718px;height:12px;border-radius:6px;background:linear-gradient(90deg,#22c55e,#16a34a)"></div>
<div class="abs" style="left:1133px;top:539px;width:12px;height:12px;border-radius:50%;background:#3b82f6"></div>
<div class="t" style="top:534.0px;font-size:14px;line-height:20px;color:#3f434a;font-weight:400;-webkit-text-stroke:0.25px #3f434a;letter-spacing:0.189px;left:1153px;">Active Animals</div>
<div class="abs" style="left:1133px;top:603px;width:12px;height:12px;border-radius:50%;background:#22c55e"></div>
<div class="t" style="top:598.0px;font-size:14px;line-height:20px;color:#3f434a;font-weight:400;-webkit-text-stroke:0.25px #3f434a;letter-spacing:0.203px;left:1153px;">Milk Producing Animals</div>
<div class="abs" style="left:1133px;top:667px;width:12px;height:12px;border-radius:50%;background:#a855f7"></div>
<div class="t" style="top:662.0px;font-size:14px;line-height:20px;color:#3f434a;font-weight:400;-webkit-text-stroke:0.25px #3f434a;letter-spacing:0.086px;left:1153px;">Average Daily Yield</div>
<div class="abs" style="left:1133px;top:735px;width:12px;height:12px;border-radius:50%;background:#eab308"></div>
<div class="t" style="top:730.0px;font-size:14px;line-height:20px;color:#3f434a;font-weight:400;-webkit-text-stroke:0.25px #3f434a;letter-spacing:0.325px;left:1153px;">Top Performer</div>
<div class="t" style="top:530.5px;font-size:18px;line-height:28px;color:#2563eb;font-weight:700;letter-spacing:-1.000px;right:62.000px;">19</div>
<div class="t" style="top:594.5px;font-size:18px;line-height:28px;color:#16a34a;font-weight:700;letter-spacing:-1.000px;right:62.000px;">19</div>
<div class="t" style="top:658.5px;font-size:18px;line-height:28px;color:#9333ea;font-weight:700;letter-spacing:-0.458px;right:61.458px;">69.32 L</div>
<div class="t" style="top:722.0px;font-size:14px;line-height:20px;color:#ca8a04;font-weight:700;letter-spacing:-0.354px;right:61.354px;">Mahishi</div>
<div class="t" style="top:743.0px;font-size:12px;line-height:16px;color:#6b7280;font-weight:400;letter-spacing:-0.161px;right:61.161px;">94.5 L/day</div>
<div class="card" style="left:272px;top:820px;width:1624px;height:400px"></div>
<div class="t" style="top:841.0px;font-size:24px;line-height:32px;color:#0a0a0a;font-weight:400;-webkit-text-stroke:0.45px #0a0a0a;letter-spacing:0.238px;left:297px;">Monthly Milk Production</div>
<svg class="abs" style="left:0;top:0" width="1920" height="1080" viewBox="0 0 1920 1080" font-family="Liberation Sans, sans-serif"><line x1="417.0" y1="912.5" x2="1841.0" y2="912.5" stroke="#dadada" stroke-dasharray="3 3"/><line x1="417.0" y1="985.25" x2="1841.0" y2="985.25" stroke="#dadada" stroke-dasharray="3 3"/><line x1="417.0" y1="1058.0" x2="1841.0" y2="1058.0" stroke="#dadada" stroke-dasharray="3 3"/><line x1="476.33" y1="912.5" x2="476.33" y2="1090" stroke="#dadada" stroke-dasharray="3 3"/><line x1="595.00" y1="912.5" x2="595.00" y2="1090" stroke="#dadada" stroke-dasharray="3 3"/><line x1="713.67" y1="912.5" x2="713.67" y2="1090" stroke="#dadada" stroke-dasharray="3 3"/><line x1="832.33" y1="912.5" x2="832.33" y2="1090" stroke="#dadada" stroke-dasharray="3 3"/><line x1="951.00" y1="912.5" x2="951.00" y2="1090" stroke="#dadada" stroke-dasharray="3 3"/><line x1="1069.67" y1="912.5" x2="1069.67" y2="1090" stroke="#dadada" stroke-dasharray="3 3"/><line x1="1188.33" y1="912.5" x2="1188.33" y2="1090" stroke="#dadada" stroke-dasharray="3 3"/><line x1="1307.00" y1="912.5" x2="1307.00" y2="1090" stroke="#dadada" stroke-dasharray="3 3"/><line x1="1425.67" y1="912.5" x2="1425.67" y2="1090" stroke="#dadada" stroke-dasharray="3 3"/><line x1="1544.33" y1="912.5" x2="1544.33" y2="1090" stroke="#dadada" stroke-dasharray="3 3"/><line x1="1663.00" y1="912.5" x2="1663.00" y2="1090" stroke="#dadada" stroke-dasharray="3 3"/><line x1="1781.67" y1="912.5" x2="1781.67" y2="1090" stroke="#dadada" stroke-dasharray="3 3"/><line x1="1841.0" y1="912.5" x2="1841.0" y2="1090" stroke="#dadada" stroke-dasharray="3 3"/><rect x="428.87" y="1003" width="94.33" height="90" fill="#8884d8"/><line x1="417.0" y1="912.5" x2="417.0" y2="1090" stroke="#666"/><line x1="411.0" y1="912.5" x2="417.0" y2="912.5" stroke="#666"/><text x="409.0" y="916.5" text-anchor="end" font-size="12" fill="#666">6000</text><line x1="411.0" y1="985.25" x2="417.0" y2="985.25" stroke="#666"/><text x="409.0" y="989.25" text-anchor="end" font-size="12" fill="#666">4500</text><line x1="411.0" y1="1058.0" x2="417.0" y2="1058.0" stroke="#666"/><text x="409.0" y="1062.0" text-anchor="end" font-size="12" fill="#666">3000</text><text transform="rotate(-90 372 1007)" x="372" y="1007" text-anchor="middle" font-size="16" fill="#808080">Production (L)</text></svg>
</div></body></html>
